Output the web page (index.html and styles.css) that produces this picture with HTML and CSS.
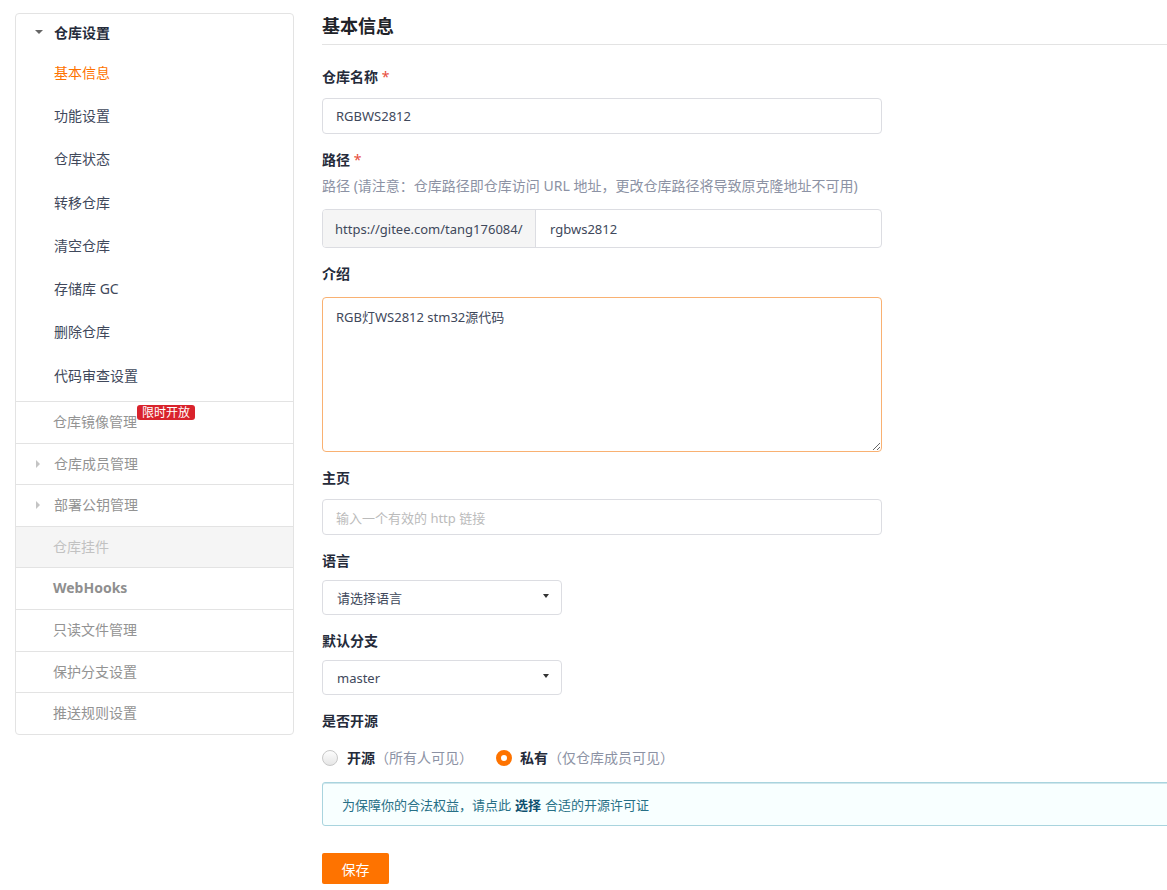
FILE: index.html
```html
<!DOCTYPE html>
<html lang="zh-CN">
<head>
<meta charset="utf-8">
<title>基本信息</title>
<link rel="stylesheet" href="styles.css">
</head>
<body>
<div class="page">
  <aside class="sidebar">
    <div class="menu-group">
      <div class="group-head"><span class="caret-down"></span>仓库设置</div>
      <div class="sub-item active">基本信息</div>
      <div class="sub-item">功能设置</div>
      <div class="sub-item">仓库状态</div>
      <div class="sub-item">转移仓库</div>
      <div class="sub-item">清空仓库</div>
      <div class="sub-item">存储库 GC</div>
      <div class="sub-item">删除仓库</div>
      <div class="sub-item">代码审查设置</div>
    </div>
    <div class="menu-item"><span class="badge-wrap">仓库镜像管理<span class="badge">限时开放</span></span></div>
    <div class="menu-item with-caret"><span class="caret-right"></span>仓库成员管理</div>
    <div class="menu-item with-caret"><span class="caret-right"></span>部署公钥管理</div>
    <div class="menu-item disabled">仓库挂件</div>
    <div class="menu-item bold">WebHooks</div>
    <div class="menu-item">只读文件管理</div>
    <div class="menu-item">保护分支设置</div>
    <div class="menu-item">推送规则设置</div>
  </aside>

  <main class="main">
    <h2 class="title">基本信息</h2>

    <div class="field">
      <div class="label">仓库名称 <span class="req">*</span></div>
      <div class="input">RGBWS2812</div>
    </div>

    <div class="field">
      <div class="label">路径 <span class="req">*</span></div>
      <div class="help">路径 (请注意：仓库路径即仓库访问 URL 地址，更改仓库路径将导致原克隆地址不可用)</div>
      <div class="input-group">
        <div class="prefix">https://gitee.com/tang176084/</div>
        <div class="group-input">rgbws2812</div>
      </div>
    </div>

    <div class="field">
      <div class="label label-ta">介绍</div>
      <textarea class="textarea">RGB灯WS2812 stm32源代码</textarea>
    </div>

    <div class="field">
      <div class="label">主页</div>
      <div class="input placeholder">输入一个有效的 http 链接</div>
    </div>

    <div class="field">
      <div class="label label-sel">语言</div>
      <div class="select"><span>请选择语言</span><span class="sel-caret"></span></div>
    </div>

    <div class="field">
      <div class="label label-sel">默认分支</div>
      <div class="select"><span>master</span><span class="sel-caret"></span></div>
    </div>

    <div class="field field-radio">
      <div class="label label-radio">是否开源</div>
      <div class="radios">
        <label class="radio"><span class="dot"></span><b>开源</b><span class="note">（所有人可见）</span></label>
        <label class="radio"><span class="dot checked"></span><b>私有</b><span class="note">（仅仓库成员可见）</span></label>
      </div>
    </div>

    <div class="notice">为保障你的合法权益，请点此 <b>选择</b> 合适的开源许可证</div>

    <button class="save">保存</button>
  </main>
</div>
</body>
</html>
```

FILE: styles.css
```css
html, body {
  margin: 0;
  padding: 0;
  background: #fff;
  overflow: hidden;
}
body {
  font-family: "Noto Sans", "Noto Sans CJK SC", sans-serif;
  font-size: 14px;
  color: #40485b;
}
.page {
  display: flex;
  align-items: flex-start;
  gap: 28px;
  padding: 13px 0 0 15px;
  width: 1260px;
}

/* Sidebar */
.sidebar {
  width: 277px;
  flex: none;
  border: 1px solid #e3e3e3;
  border-radius: 4px;
  background: #fff;
}
.menu-group {
  padding-bottom: 4.6px;
}
.group-head {
  height: 36px;
  display: flex;
  align-items: center;
  padding-left: 19px;
  font-weight: bold;
  color: #252b3a;
}
.caret-down {
  width: 0;
  height: 0;
  border-left: 4px solid transparent;
  border-right: 4px solid transparent;
  border-top: 4px solid #666;
  margin-right: 11px;
  margin-top: -1px;
}
.sub-item {
  height: 43.3px;
  display: flex;
  align-items: center;
  padding-left: 38px;
  color: #40485b;
}
.sub-item.active {
  color: #fe7300;
}
.menu-item {
  height: 38.6px;
  padding-bottom: 2px;
  border-top: 1px solid #e3e3e3;
  display: flex;
  align-items: center;
  padding-left: 37px;
  color: #939393;
}
.menu-item.with-caret {
  padding-left: 20px;
}
.caret-right {
  width: 0;
  height: 0;
  border-top: 4px solid transparent;
  border-bottom: 4px solid transparent;
  border-left: 4px solid #c4c4c4;
  margin-right: 14px;
  margin-top: 2px;
}
.menu-item.disabled {
  background: #f5f5f5;
  color: #c2c2c2;
}
.menu-item.bold {
  font-weight: bold;
  color: #8f8f8f;
}
.badge-wrap {
  position: relative;
}
.badge {
  position: absolute;
  left: 100%;
  top: -6px;
  white-space: nowrap;
  background: #d9232c;
  color: #fff;
  font-size: 12px;
  line-height: 15px;
  padding: 0 5px;
  border-radius: 3px;
}

/* Main */
.main {
  flex: 1;
  min-width: 0;
}
.title {
  margin: 0 0 22px;
  font-size: 18px;
  line-height: 26px;
  padding-bottom: 5px;
  font-weight: bold;
  color: #1f2329;
  border-bottom: 1px solid #e3e3e3;
}
.field {
  margin-bottom: 16px;
}
.field-radio {
  margin-bottom: 14px;
}
.label {
  font-weight: bold;
  line-height: 20px;
  margin-bottom: 11px;
  color: #252b3a;
}
.label-ta { margin-bottom: 13px; }
.label-sel { margin-bottom: 9px; }
.label-radio { margin-bottom: 17px; }
.req {
  color: #e74c3c;
  font-weight: normal;
}
.help {
  color: #8c92a4;
  line-height: 20px;
  margin: -5px 0 13px;
}
.input {
  height: 34px;
  border: 1px solid #dcdde2;
  border-radius: 4px;
  display: flex;
  align-items: center;
  padding: 0 13px;
  box-sizing: content-box;
  width: 532px;
  font-size: 13px;
  color: #40485b;
}
.input.placeholder {
  color: #bbbbbb;
}
.input-group {
  width: 558px;
  height: 37px;
  border: 1px solid #dcdde2;
  border-radius: 4px;
  display: flex;
  font-size: 13px;
  overflow: hidden;
}
.prefix {
  width: 213px;
  box-sizing: border-box;
  background: #f5f5f5;
  border-right: 1px solid #dcdde2;
  display: flex;
  align-items: center;
  padding-left: 12px;
  color: #40485b;
}
.group-input {
  display: flex;
  align-items: center;
  padding-left: 14px;
  color: #40485b;
}
.textarea {
  display: block;
  width: 560px;
  height: 155px;
  box-sizing: border-box;
  border: 1px solid #f9b172;
  border-radius: 4px;
  padding: 10px 13px;
  font-family: inherit;
  font-size: 13px;
  line-height: 18px;
  color: #40485b;
  resize: vertical;
  outline: none;
  margin: 0;
}
.select {
  width: 240px;
  height: 35px;
  box-sizing: border-box;
  border: 1px solid #dcdde2;
  border-radius: 4px;
  display: flex;
  align-items: center;
  justify-content: space-between;
  padding: 0 12px 0 14px;
  font-size: 13px;
  color: #40485b;
}
.sel-caret {
  width: 0;
  height: 0;
  border-left: 3.5px solid transparent;
  border-right: 3.5px solid transparent;
  border-top: 4px solid #333;
  margin-top: -3px;
}
.radios {
  display: flex;
  gap: 23px;
  line-height: 20px;
}
.radio {
  display: flex;
  align-items: center;
}
.radio b {
  color: #252b3a;
}
.dot {
  width: 14px;
  height: 14px;
  border-radius: 50%;
  border: 1px solid #c8c8c8;
  background: linear-gradient(#fdfdfd, #e6e6e6);
  margin-right: 9px;
}
.dot.checked {
  width: 6px;
  height: 6px;
  border: 5px solid #fe7300;
  background: #fff;
  margin-right: 8px;
}
.note {
  color: #8c92a4;
}
.notice {
  width: 900px;
  height: 42px;
  border: 1px solid #a9d4de;
  border-radius: 3px;
  background: #f8ffff;
  display: flex;
  align-items: center;
  padding-left: 19px;
  font-size: 13px;
  color: #276f86;
  box-shadow: inset 0 1px 0 #cfe6ec;
}
.notice b {
  color: #0d4f6e;
  margin: 0 4px;
}
.save {
  margin-top: 27px;
  width: 67px;
  height: 31px;
  border: none;
  border-radius: 2px;
  background: #fe7300;
  color: #fff;
  font-family: inherit;
  font-size: 14px;
  padding: 0;
}
```
